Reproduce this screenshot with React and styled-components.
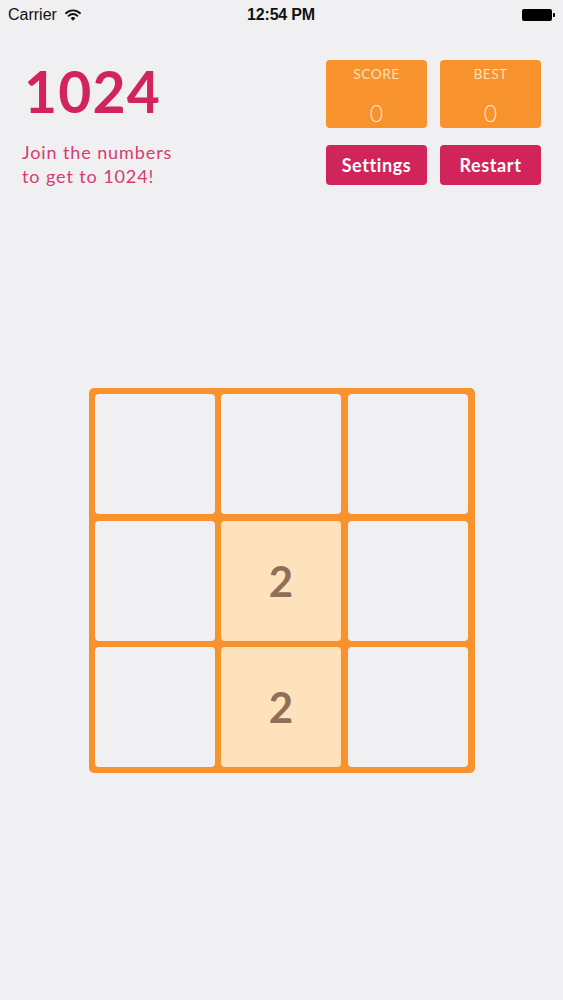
import React from "react";
import styled, { createGlobalStyle } from "styled-components";

const Global = createGlobalStyle`
  html, body { margin: 0; padding: 0; background: #f0eff1; }
  body { font-family: "Lato", "Open Sans", sans-serif; -webkit-font-smoothing: antialiased; }
`;

const Page = styled.div`
  width: 563px;
  min-height: 1000px;
  background: #f0eff1;
  display: flex;
  flex-direction: column;
`;

const StatusBar = styled.div`
  height: 30px;
  display: grid;
  grid-template-columns: 1fr auto 1fr;
  align-items: center;
  padding: 0 9px 0 8px;
  font-family: "Liberation Sans", Arial, sans-serif;
  font-size: 16px;
  color: #111;
`;

const Carrier = styled.div`
  display: flex;
  align-items: center;
  gap: 8px;
`;

const Clock = styled.div`
  font-weight: bold;
  text-align: center;
  letter-spacing: -0.2px;
`;

const BatteryWrap = styled.div`
  display: flex;
  justify-content: flex-end;
  align-items: center;
`;

const Battery = styled.div`
  width: 30px;
  height: 12px;
  background: #000;
  border-radius: 2px;
  position: relative;
  margin-right: 2px;
  &::after {
    content: "";
    position: absolute;
    right: -3px;
    top: 4px;
    width: 2px;
    height: 4px;
    background: #000;
    border-radius: 0 1px 1px 0;
  }
`;

const Header = styled.header`
  display: flex;
  justify-content: space-between;
  padding: 0 22px;
  margin-top: 30px;
`;

const TitleBlock = styled.div`
  display: flex;
  flex-direction: column;
  padding-top: 3px;
`;

const Title = styled.h1`
  margin: 0;
  font-size: 57px;
  line-height: 57px;
  font-weight: 700;
  color: #d0245a;
  padding-left: 2px;
  letter-spacing: 1.2px;
`;

const Subtitle = styled.p`
  margin: 20px 0 0;
  font-size: 18px;
  line-height: 24px;
  color: #d43d6d;
  font-weight: 400;
  letter-spacing: 0.9px;
`;

const Controls = styled.div`
  display: grid;
  grid-template-columns: 101px 101px;
  grid-template-rows: 68px 40px;
  column-gap: 13px;
  row-gap: 17px;
  align-content: start;
`;

const ScoreBox = styled.div`
  background: #f8922c;
  border-radius: 4px;
  display: flex;
  flex-direction: column;
  align-items: center;
`;

const ScoreLabel = styled.span`
  margin-top: 7px;
  font-size: 14px;
  line-height: 14px;
  color: #ffe0b3;
  letter-spacing: 0.3px;
`;

const ScoreValue = styled.span`
  margin-top: 21px;
  font-size: 23px;
  line-height: 22px;
  font-weight: 300;
  color: #ffe6c4;
`;

const Button = styled.button`
  border: none;
  border-radius: 4px;
  background: #d0245a;
  color: #fff;
  font-family: "Lato", sans-serif;
  font-size: 18px;
  font-weight: 700;
  letter-spacing: 0.6px;
  padding: 0;
  cursor: pointer;
`;

const Board = styled.div`
  align-self: center;
  margin-top: 200px;
  width: 386px;
  box-sizing: border-box;
  padding: 6px;
  background: #f8922c;
  border-radius: 5px;
  display: grid;
  grid-template-columns: repeat(3, 120px);
  grid-auto-rows: 120px;
  gap: 6.5px;
`;

const Tile = styled.div`
  border-radius: 4px;
  background: ${(p) => (p.$value ? "#fee2bb" : "#f0eff1")};
  color: #8e6f57;
  font-size: 42px;
  font-weight: 700;
  display: flex;
  align-items: center;
  justify-content: center;
`;

const WifiIcon = () => (
  <svg width="16" height="12" viewBox="0 0 16 12" fill="none">
    <path d="M1 4.2 A10 10 0 0 1 15 4.2" stroke="#111" strokeWidth="1.9" strokeLinecap="round" />
    <path d="M3.6 6.8 A6.2 6.2 0 0 1 12.4 6.8" stroke="#111" strokeWidth="1.9" strokeLinecap="round" />
    <path d="M6.1 9.2 A2.8 2.8 0 0 1 9.9 9.2 L8 11.3 Z" fill="#111" stroke="#111" strokeWidth="1" strokeLinejoin="round" />
  </svg>
);

const cells = [0, 0, 0, 0, 2, 0, 0, 2, 0];

export default function App() {
  return (
    <Page>
      <Global />
      <StatusBar>
        <Carrier>
          Carrier
          <WifiIcon />
        </Carrier>
        <Clock>12:54 PM</Clock>
        <BatteryWrap>
          <Battery />
        </BatteryWrap>
      </StatusBar>
      <Header>
        <TitleBlock>
          <Title>1024</Title>
          <Subtitle>
            Join the numbers
            <br />
            to get to 1024!
          </Subtitle>
        </TitleBlock>
        <Controls>
          <ScoreBox>
            <ScoreLabel>SCORE</ScoreLabel>
            <ScoreValue>0</ScoreValue>
          </ScoreBox>
          <ScoreBox>
            <ScoreLabel>BEST</ScoreLabel>
            <ScoreValue>0</ScoreValue>
          </ScoreBox>
          <Button>Settings</Button>
          <Button>Restart</Button>
        </Controls>
      </Header>
      <Board>
        {cells.map((v, i) => (
          <Tile key={i} $value={v}>
            {v ? v : ""}
          </Tile>
        ))}
      </Board>
    </Page>
  );
}
